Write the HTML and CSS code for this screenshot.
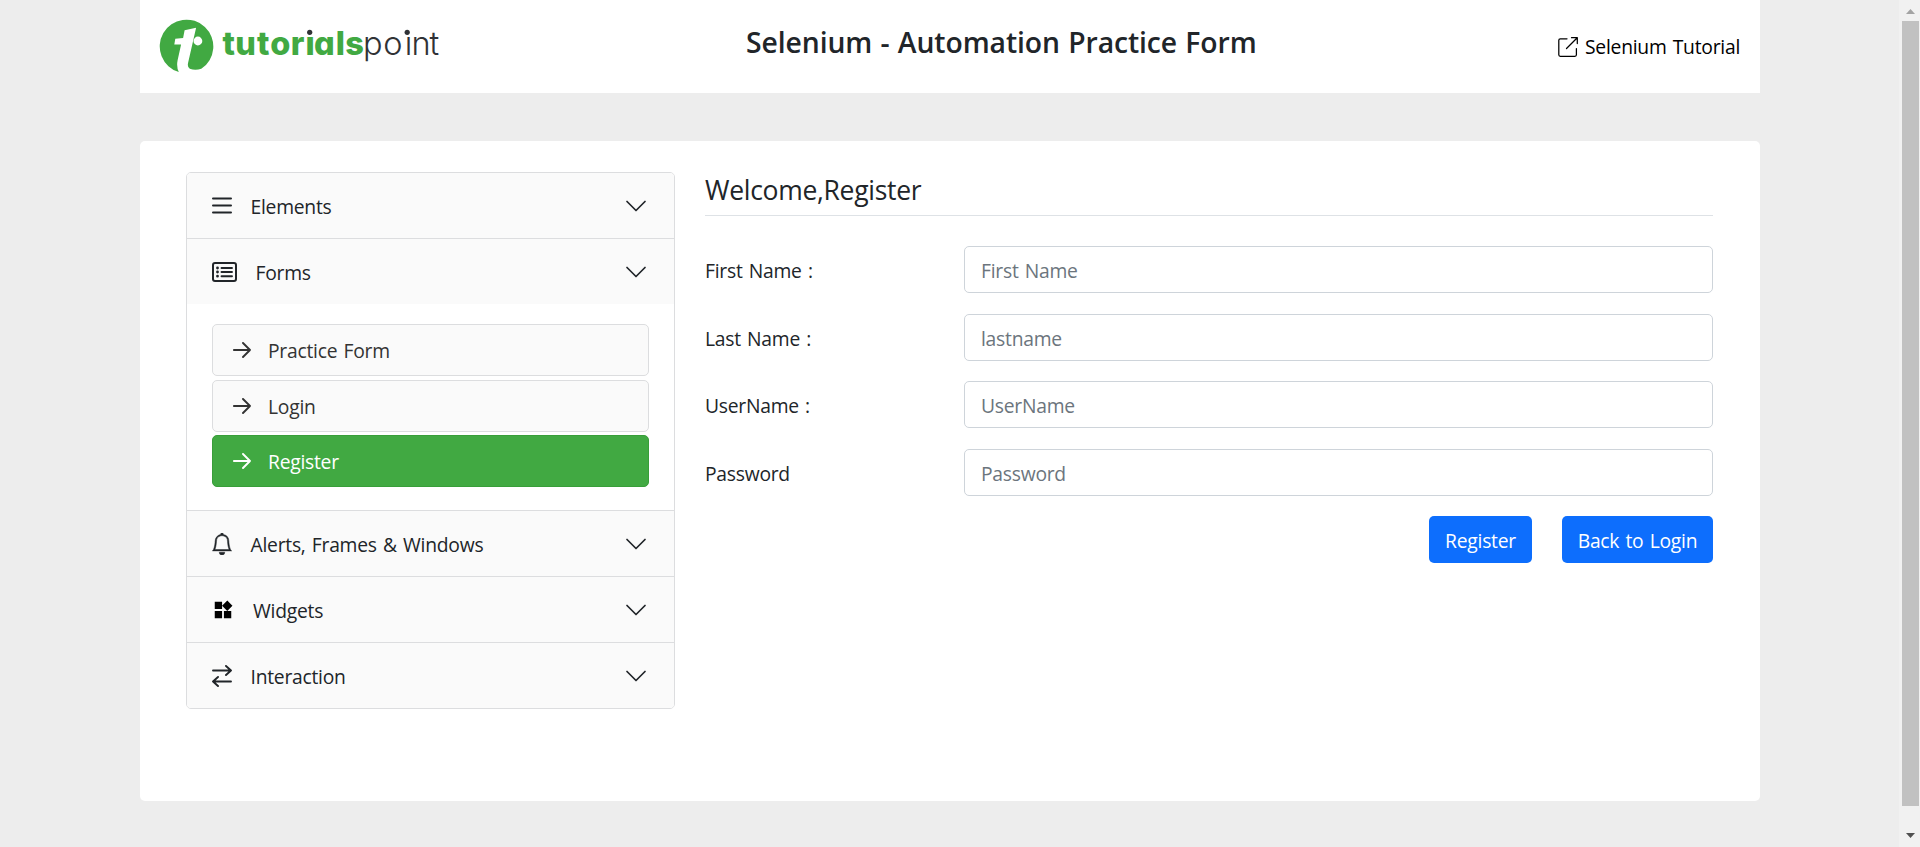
FILE: index.html
```html
<!DOCTYPE html>
<html lang="en">
<head>
<meta charset="utf-8">
<title>Selenium Practice - Register</title>
<link rel="stylesheet" href="styles.css">
</head>
<body>
<svg class="sprite" aria-hidden="true">
  <symbol id="chev" viewBox="0 0 16 16"><path d="M2 5l6 6 6-6" fill="none" stroke="currentColor" stroke-width="1.150" stroke-linecap="round" stroke-linejoin="round"/></symbol>
  <symbol id="arrow" viewBox="0 0 18 16"><path d="M.8 8H17M10 1l7 7-7 7" fill="none" stroke="currentColor" stroke-width="1.9" stroke-linecap="round" stroke-linejoin="round"/></symbol>
</svg>
<div class="window">
  <div class="page">
    <header class="header">
      <svg class="logo" viewBox="0 0 290 64" width="290" height="64">
        <path d="M20.500 58.800A26.800 26.800 0 1 1 43 55.500Q37 57.500 31.500 55.500Q28.800 54 29.800 49.500L37.800 14.500 26.300 17 24.800 24.700 17 25.500 16 31.300H22.800L19.300 47Q18 54 20.500 58.800Z" fill="#41a942" transform="translate(2.300 .3)"/>
        <circle cx="41.900" cy="28" r="4.400" fill="#fff"/>
        <text class="logo-bold" x="66.500 79.300 101 114.300 134.800 149.500 158 179.800 189.300" y="41.500">tutorials</text>
        <text class="logo-light" x="207 227.300 248.700 255.500 273.500" y="41.500">point</text>
        <path d="M148.500 10h11v12.500h-11zM246.500 10h9v12.500h-9z" fill="#fff"/>
        <circle cx="153.700" cy="19.300" r="2.600" fill="#303236"/>
        <circle cx="251.200" cy="19.300" r="2.600" fill="#303236"/>
      </svg>
      <h1 class="title">Selenium - Automation Practice Form</h1>
      <a class="tutorial"><svg viewBox="0 0 20 20" width="20" height="20"><path d="M9 1.800H2.300Q.8 1.800.8 3.200V17.800Q.8 19.300 2.300 19.300H16.900Q18.400 19.300 18.400 17.800V11.500M13.500.7H19.300V6.500M19 1L8.500 11.500" fill="none" stroke="currentColor" stroke-width="1.250" stroke-linecap="round" stroke-linejoin="round"/></svg><span>Selenium Tutorial</span></a>
    </header>
    <main class="card">
      <nav class="accordion">
        <div class="item"><svg class="ic" viewBox="0 0 20 20" width="20" height="20"><path d="M1 2.500h18M1 9.500h18M1 16.500h18" stroke="currentColor" stroke-width="2" stroke-linecap="round"/></svg><span>Elements</span><svg class="chev"><use href="#chev"/></svg></div>
        <div class="item forms"><svg class="ic wide" viewBox="0 0 25 20" width="25" height="20"><rect x="1" y="1" width="23" height="18" rx="2" fill="none" stroke="currentColor" stroke-width="2"/><path d="M9.500 6H20M9.500 10H20M9.500 14.200H20" stroke="currentColor" stroke-width="1.900" stroke-linecap="round"/><path d="M5.500 6h.01M5.500 10h.01M5.500 14.200h.01" stroke="currentColor" stroke-width="2.800" stroke-linecap="round"/></svg><span>Forms</span><svg class="chev"><use href="#chev"/></svg></div>
        <div class="sub">
          <a class="link"><svg><use href="#arrow"/></svg><span>Practice Form</span></a>
          <a class="link"><svg><use href="#arrow"/></svg><span>Login</span></a>
          <a class="link active"><svg><use href="#arrow"/></svg><span>Register</span></a>
        </div>
        <div class="item lined"><svg class="ic bell" viewBox="0 0 16 16" width="22" height="22"><path stroke="currentColor" stroke-width=".35" d="M8 16a2 2 0 0 0 2-2H6a2 2 0 0 0 2 2zM8 1.918l-.797.161A4.002 4.002 0 0 0 4 6c0 .628-.134 2.197-.459 3.742-.16.767-.376 1.566-.663 2.258h10.244c-.287-.692-.502-1.490-.663-2.258C12.134 8.197 12 6.628 12 6a4.002 4.002 0 0 0-3.203-3.920L8 1.917zM14.220 12c.223.447.481.801.780 1H1c.299-.199.557-.553.780-1C2.680 10.200 3 6.880 3 6c0-2.420 1.720-4.440 4.005-4.901a1 1 0 1 1 1.990 0A5.002 5.002 0 0 1 13 6c0 .880.320 4.200 1.220 6z"/></svg><span>Alerts, Frames &amp; Windows</span><svg class="chev"><use href="#chev"/></svg></div>
        <div class="item lined"><svg class="ic widgets" viewBox="0 0 24 24" width="22" height="22"><path d="M3 3h8v8H3zM3 13h8v8H3zM13 13h8v8h-8zM16.660 1.690 22.310 7.340 16.660 13 11 7.340z" fill="#000"/></svg><span>Widgets</span><svg class="chev"><use href="#chev"/></svg></div>
        <div class="item lined"><svg class="ic" viewBox="0 0 20 22" width="20" height="22"><path d="M1 5.500H19M14 1l5 4.500L14 10M19 16.500H1M6 12l-5 4.500L6 21" fill="none" stroke="currentColor" stroke-width="1.900" stroke-linecap="round" stroke-linejoin="round"/></svg><span>Interaction</span><svg class="chev"><use href="#chev"/></svg></div>
      </nav>
      <form class="form">
        <h2 class="heading">Welcome,Register</h2>
        <div class="row"><label for="fn">First Name :</label><input id="fn" placeholder="First Name"></div>
        <div class="row"><label for="ln">Last Name :</label><input id="ln" placeholder="lastname"></div>
        <div class="row"><label for="un">UserName :</label><input id="un" placeholder="UserName"></div>
        <div class="row"><label for="pw">Password</label><input id="pw" type="password" placeholder="Password"></div>
        <div class="actions"><button type="button" class="btn reg">Register</button><button type="button" class="btn back">Back to Login</button></div>
      </form>
    </main>
  </div>
  <div class="scrollbar"><svg width="17" height="21" viewBox="0 0 17 21"><path d="M4 14l4.500-5 4.500 5z" fill="#a3a3a3"/></svg><div class="thumb"></div><svg width="17" height="22" viewBox="0 0 17 22"><path d="M4 8h9l-4.500 5z" fill="#505050"/></svg></div>
</div>
</body>
</html>
```

FILE: styles.css
```css
* { box-sizing: border-box; }
body { margin: 0; background: #ededed; color: #212529; font: 19.3px/30px "Open Sans", "Noto Sans", sans-serif; letter-spacing: -.25px; word-spacing: 1.5px; overflow: hidden; }
.sprite { display: none; }
.window { display: flex; height: 847px; }
.page { flex: 1; padding: 0 139px 0 140px; }
svg { fill: currentColor; flex: none; }
.header { display: flex; height: 93px; padding: 13px 20px 0 16px; background: #fff; }
.logo { display: block; letter-spacing: 0; }
.logo-bold { font: 800 32.5px Inter, "Open Sans", sans-serif; font-feature-settings: "cv11"; fill: #41a942; }
.logo-light { font: 300 32.5px Inter, "Open Sans", sans-serif; fill: #303236; }
.title { margin: 11px 0 0 300px; width: 494px; font-size: 28.3px; font-weight: 600; line-height: 36px; letter-spacing: -.08px; word-spacing: 1px; white-space: nowrap; }
.tutorial { display: flex; gap: 7px; margin: 19px 0 0 auto; color: #000; white-space: nowrap; }
.tutorial svg { margin-top: 5px; }
.card { display: flex; gap: 30px; height: 660px; margin-top: 48px; padding: 31px 47px 0 46px; background: #fff; border-radius: 5px; }
.accordion { width: 489px; height: 537px; border: 1px solid #dcdddf; border-radius: 5px; overflow: hidden; }
.item { display: flex; align-items: center; height: 65px; padding: 0 26px 0 25px; background: #fafafa; white-space: nowrap; }
.item.forms, .item.lined { height: 66px; border-top: 1px solid #dcdddf; }
.item span { padding-top: 3px; }
.ic { margin-right: 18.500px; }
.ic.bell { margin: 0 17.500px 0 -1px; }
.ic.widgets { margin: 0 19px 0 0; }
.chev { width: 24px; height: 24px; margin-left: auto; }
.sub { display: flex; flex-direction: column; gap: 3.500px; height: 206px; padding: 20px 25px 0; }
.link { display: flex; align-items: center; height: 52px; padding: 0 20px; gap: 17px; border: 1px solid #dcdddf; border-radius: 5px; background: #fafafa; color: #333; }
.link span { padding-top: 2px; }
.link svg { width: 18px; height: 16px; }
.link.active { background: #41a942; border-color: #389e39; color: #fff; }
.form { flex: 1; }
.heading { margin: 0 0 30px; height: 44px; border-bottom: 1px solid #dee2e6; font-size: 26.5px; font-weight: 400; line-height: 36px; letter-spacing: -.3px; }
.row { display: grid; grid-template-columns: 259px 1fr; height: 47px; margin-bottom: 20.600px; }
.row label { padding-top: 10px; }
.row input { width: 100%; height: 47px; padding: 2px 16px 0; border: 1px solid #ced4da; border-radius: 5px; font: inherit; letter-spacing: inherit; word-spacing: inherit; outline: none; }
.row input::placeholder { color: #6c757d; opacity: 1; }
.actions { display: flex; justify-content: flex-end; gap: 30px; }
.btn { height: 47px; padding: 3px 0 0; border: 0; border-radius: 5px; background: #0d6efd; color: #fff; font: inherit; letter-spacing: inherit; word-spacing: inherit; }
.reg { width: 103px; }
.back { width: 151px; }
.scrollbar { display: flex; flex-direction: column; align-items: center; width: 21px; padding-left: 2px; background: #f1f1f1; }
.thumb { width: 17px; height: 785px; margin-bottom: 19px; background: #c1c1c1; }
```
